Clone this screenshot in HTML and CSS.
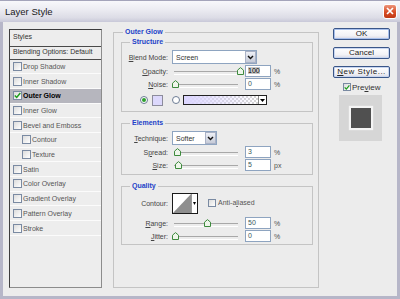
FILE: index.html
```html
<!DOCTYPE html>
<html lang="en">
<head>
    <meta charset="UTF-8">
    <title>Layer Style</title>
    <link rel="stylesheet" href="styles.css">
</head>
<body>
<div class="window">
    <div class="titlebar">
        <span class="title">Layer Style</span>
        <span class="close"><svg width="8" height="8" viewBox="0 0 8 8"><path d="M1 1L7 7M7 1L1 7" stroke="#fff" stroke-width="1.7"/></svg></span>
    </div>

    <div class="content">
        <!-- lista de estilos -->
        <div class="styles-list">
            <div class="list-head">Styles</div>
            <div class="list-blend">Blending Options: Default</div>
            <div class="item"><span class="check"></span>Drop Shadow</div>
            <div class="item"><span class="check"></span>Inner Shadow</div>
            <div class="item selected"><span class="check"><svg width="7" height="7" viewBox="0 0 7 7"><path d="M0.8 3.4L2.7 5.4L6.3 1" fill="none" stroke="#1e9e1e" stroke-width="1.5"/></svg></span>Outer Glow</div>
            <div class="item"><span class="check"></span>Inner Glow</div>
            <div class="item"><span class="check"></span>Bevel and Emboss</div>
            <div class="item sub"><span class="check"></span>Contour</div>
            <div class="item sub"><span class="check"></span>Texture</div>
            <div class="item"><span class="check"></span>Satin</div>
            <div class="item"><span class="check"></span>Color Overlay</div>
            <div class="item"><span class="check"></span>Gradient Overlay</div>
            <div class="item"><span class="check"></span>Pattern Overlay</div>
            <div class="item"><span class="check"></span>Stroke</div>
        </div>

        <fieldset class="panel">
            <legend>Outer Glow</legend>

            <fieldset class="group">
                <legend>Structure</legend>
                <div class="row tall">
                    <label class="lbl"><u>B</u>lend Mode:</label>
                    <div class="select wide"><span>Screen</span><span class="drop"><svg width="7" height="5" viewBox="0 0 7 5"><path d="M1 1L3.5 3.6L6 1" fill="none" stroke="#111" stroke-width="1.4"/></svg></span></div>
                </div>
                <div class="row">
                    <label class="lbl"><u>O</u>pacity:</label>
                    <div class="slider"><span class="thumb" style="left:68px"><svg width="7" height="8" viewBox="0 0 7 8"><path d="M0.5 3.2L3.5 0.6L6.5 3.2V7.5H0.5Z" fill="#eef6ea" stroke="#3d8a3d"/></svg></span></div>
                    <span class="field"><span class="hl">100</span></span><span class="unit">%</span>
                </div>
                <div class="row">
                    <label class="lbl"><u>N</u>oise:</label>
                    <div class="slider"><span class="thumb" style="left:3px"><svg width="7" height="8" viewBox="0 0 7 8"><path d="M0.5 3.2L3.5 0.6L6.5 3.2V7.5H0.5Z" fill="#eef6ea" stroke="#3d8a3d"/></svg></span></div>
                    <span class="field">0</span><span class="unit">%</span>
                </div>
                <div class="row colors">
                    <span class="radio on"></span>
                    <span class="swatch"></span>
                    <span class="radio second"></span>
                    <div class="gradient"><span class="ramp"></span><span class="gdrop"><svg width="5" height="3" viewBox="0 0 5 3"><path d="M0 0H5L2.5 3Z" fill="#000"/></svg></span></div>
                </div>
            </fieldset>

            <fieldset class="group spaced">
                <legend>Elements</legend>
                <div class="row tall">
                    <label class="lbl"><u>T</u>echnique:</label>
                    <div class="select narrow"><span>Softer</span><span class="drop"><svg width="7" height="5" viewBox="0 0 7 5"><path d="M1 1L3.5 3.6L6 1" fill="none" stroke="#111" stroke-width="1.4"/></svg></span></div>
                </div>
                <div class="row">
                    <label class="lbl">S<u>p</u>read:</label>
                    <div class="slider"><span class="thumb" style="left:5px"><svg width="7" height="8" viewBox="0 0 7 8"><path d="M0.5 3.2L3.5 0.6L6.5 3.2V7.5H0.5Z" fill="#eef6ea" stroke="#3d8a3d"/></svg></span></div>
                    <span class="field">3</span><span class="unit">%</span>
                </div>
                <div class="row">
                    <label class="lbl"><u>S</u>ize:</label>
                    <div class="slider"><span class="thumb" style="left:6px"><svg width="7" height="8" viewBox="0 0 7 8"><path d="M0.5 3.2L3.5 0.6L6.5 3.2V7.5H0.5Z" fill="#eef6ea" stroke="#3d8a3d"/></svg></span></div>
                    <span class="field">5</span><span class="unit">px</span>
                </div>
            </fieldset>

            <fieldset class="group spaced quality">
                <legend>Quality</legend>
                <div class="row contour">
                    <label class="lbl">Contour:</label>
                    <div class="contour-box">
                        <svg width="18" height="19" viewBox="0 0 18 19"><path d="M0 19L18 0V19Z" fill="#8e8e8e"/></svg>
                        <span class="cdrop"><svg width="3" height="3" viewBox="0 0 3 3"><path d="M0 0H3L1.5 3Z" fill="#000"/></svg></span>
                    </div>
                    <span class="check anti"></span><span class="anti-text">Anti-a<u>l</u>iased</span>
                </div>
                <div class="row range">
                    <label class="lbl"><u>R</u>ange:</label>
                    <div class="slider"><span class="thumb" style="left:35px"><svg width="7" height="8" viewBox="0 0 7 8"><path d="M0.5 3.2L3.5 0.6L6.5 3.2V7.5H0.5Z" fill="#eef6ea" stroke="#3d8a3d"/></svg></span></div>
                    <span class="field">50</span><span class="unit">%</span>
                </div>
                <div class="row">
                    <label class="lbl"><u>J</u>itter:</label>
                    <div class="slider"><span class="thumb" style="left:3px"><svg width="7" height="8" viewBox="0 0 7 8"><path d="M0.5 3.2L3.5 0.6L6.5 3.2V7.5H0.5Z" fill="#eef6ea" stroke="#3d8a3d"/></svg></span></div>
                    <span class="field">0</span><span class="unit">%</span>
                </div>
            </fieldset>
        </fieldset>

        <!-- botones -->
        <div class="actions">
            <div class="btn default">OK</div>
            <div class="btn">Cancel</div>
            <div class="btn wide-text"><u>N</u>ew Style...</div>
            <div class="preview"><span class="check"><svg width="7" height="7" viewBox="0 0 7 7"><path d="M0.8 3.4L2.7 5.4L6.3 1" fill="none" stroke="#1e9e1e" stroke-width="1.5"/></svg></span>Pre<u>v</u>iew</div>
            <div class="preview-box"><span class="sample"></span></div>
        </div>
    </div>
</div>
</body>
</html>
```

FILE: styles.css
```css
* {
    box-sizing: border-box;
}

body {
    margin: 0;
    font-family: "Liberation Sans", Arial, sans-serif;
    font-size: 7px;
    color: #333;
}

u {
    text-decoration: underline;
}

/* Ventana */
.window {
    width: 400px;
    height: 299px;
    background: #b6b6c8;
    padding: 0 3px 3px;
    display: flex;
    flex-direction: column;
}

.titlebar {
    height: 22px;
    margin: 0 -3px;
    padding: 0 3px 1px 5px;
    display: flex;
    align-items: center;
    justify-content: space-between;
    background: linear-gradient(#f8f8fb, #ececf2 40%, #dcdce6 80%, #c8c8d8);
    border-top: 1px solid #a4a4ba;
}

.title {
    font-size: 9.5px;
    color: #1a1a1a;
}

.close {
    width: 14px;
    height: 15px;
    border: 1px solid #fff;
    border-radius: 3px;
    background: linear-gradient(#ec947a, #d84c24 55%, #c03814);
    display: flex;
    align-items: center;
    justify-content: center;
}

.content {
    flex: 1;
    background: #ececec;
    display: flex;
    align-items: flex-start;
    padding: 7px 0 0 6px;
}

/* Lista de estilos */
.styles-list {
    width: 93px;
    height: 259px;
    border: 1px solid;
    border-color: #3c3c3c #8c8c8c #8c8c8c #3c3c3c;
    background: #ededed;
}

.list-head {
    height: 17px;
    line-height: 14px;
    padding-left: 3px;
    border-bottom: 1px solid #4a4a4a;
    color: #333;
}

.list-blend {
    height: 12.6px;
    line-height: 10px;
    padding-left: 3px;
    border-bottom: 1px solid #4a4a4a;
    color: #333;
}

.item {
    height: 14.7px;
    display: flex;
    align-items: center;
    padding-left: 3px;
    border-bottom: 1px solid #fbfbfb;
    color: #555;
}

.item.sub {
    padding-left: 12px;
}

.item.selected {
    background: #b6b6be;
    color: #000;
    font-weight: bold;
}

.check {
    width: 9px;
    height: 9px;
    margin-right: 1px;
    border: 1px solid #7a8aa2;
    background: linear-gradient(135deg, #dcdcdc, #fff);
    display: flex;
    align-items: center;
    justify-content: center;
    flex: none;
}

/* Grupos */
fieldset {
    margin: 0;
    min-width: 0;
    border: 1px solid #c4c4c4;
}

legend {
    padding: 0 2px;
    line-height: 10px;
    font-weight: bold;
    color: #2242c8;
}

.panel {
    width: 206px;
    height: 261px;
    margin: -2px 0 0 11px;
    padding: 0 5px 0 7px;
}

.panel > legend {
    margin-left: 2px;
}

.group {
    padding: 3px 0 5px 0;
}

.group > legend {
    margin-left: 8px;
}

.group.spaced {
    margin-top: 6px;
    padding-bottom: 3px;
}

.group.quality {
    padding-top: 2px;
    padding-bottom: 2px;
}

.row {
    height: 12px;
    margin-top: 1px;
    display: flex;
    align-items: center;
}

.row.tall {
    height: 14px;
    margin-top: 0;
}

.lbl {
    width: 46px;
    margin-right: 4px;
    text-align: right;
    color: #444;
    flex: none;
}

.select {
    height: 14px;
    padding-left: 3px;
    display: flex;
    align-items: center;
    background: #fff;
    border: 1px solid #8ea4c0;
    color: #333;
}

.select.wide {
    width: 85px;
}

.select.narrow {
    width: 45px;
}

.select .drop {
    width: 11px;
    height: 12px;
    margin-left: auto;
    display: flex;
    align-items: center;
    justify-content: center;
    background: linear-gradient(#eef0f6, #c6cbd8);
    border: 1px solid #aab2c6;
}

.slider {
    position: relative;
    width: 70px;
    height: 12px;
}

.slider::before {
    content: "";
    position: absolute;
    left: 2px;
    right: 4px;
    top: 6px;
    height: 2px;
    border-top: 1px solid #a8a8a8;
    border-bottom: 1px solid #fff;
}

.thumb {
    position: absolute;
    top: 2px;
    margin-left: -3.5px;
    width: 7px;
    height: 8px;
    display: flex;
}

.field {
    width: 26px;
    height: 12px;
    margin-left: 3px;
    padding-left: 2px;
    line-height: 10px;
    background: #fff;
    border: 1px solid #8ea4c0;
    color: #3a5a5a;
}

.field .hl {
    background: #c8c8c8;
    color: #000;
}

.unit {
    margin-left: 3px;
    color: #505050;
}

/* Fila de color */
.row.colors {
    margin-top: 4px;
    padding-left: 18px;
}

.radio {
    width: 8px;
    height: 8px;
    border-radius: 50%;
    border: 1px solid #6c7c94;
    background: #fff;
    display: flex;
    align-items: center;
    justify-content: center;
}

.radio.on::after {
    content: "";
    width: 4px;
    height: 4px;
    border-radius: 50%;
    background: #2ea02e;
}

.radio.second {
    margin-left: 9px;
}

.swatch {
    width: 11px;
    height: 11px;
    margin-left: 4px;
    background: #dcd8fc;
    border: 1px solid #8c8c9c;
}

.gradient {
    width: 84px;
    height: 10px;
    margin-left: 3px;
    border: 1px solid #222;
    display: flex;
}

.gradient .ramp {
    flex: 1;
    background: linear-gradient(to right, #dcd6ff, rgba(220, 214, 255, 0)), repeating-conic-gradient(#d4d4d4 0 25%, #fff 0 50%) 0 0 / 4px 4px;
}

.gradient .gdrop {
    width: 8px;
    border-left: 1px solid #888;
    background: #fff;
    display: flex;
    align-items: center;
    justify-content: center;
}

/* Contorno */
.row.contour {
    height: 21px;
    margin-top: 0;
}

.contour-box {
    width: 26px;
    height: 21px;
    border: 1px solid #1a1a1a;
    background: #fff;
    display: flex;
}

.contour-box .cdrop {
    flex: 1;
    border-left: 1px solid #999;
    display: flex;
    align-items: center;
    justify-content: center;
}

.check.anti {
    width: 8px;
    height: 8px;
    margin-left: 10px;
    margin-top: -2px;
}

.anti-text {
    margin-left: 1px;
    margin-top: -2px;
    color: #555;
}

.row.range {
    margin-top: 3px;
}

/* Botones */
.actions {
    width: 57px;
    margin: -1px 0 0 14px;
    display: flex;
    flex-direction: column;
}

.btn {
    height: 12px;
    margin-bottom: 7px;
    line-height: 10px;
    text-align: center;
    font-size: 8px;
    color: #222;
    border: 1px solid #3a5688;
    border-radius: 2px;
    background: linear-gradient(#fefefe, #f2f2f6 65%, #d8d8e4);
    box-shadow: inset 0 0 0 1px #c8d6f0;
}

.btn.default {
    box-shadow: inset 0 0 0 1px #a8c0ec;
}

.btn.wide-text {
    letter-spacing: 0.5px;
}

.preview {
    height: 8px;
    margin: -2px 0 0 10px;
    display: flex;
    align-items: center;
    font-size: 8px;
    color: #333;
}

.preview .check {
    width: 8px;
    height: 8px;
}

.preview-box {
    width: 43px;
    height: 46px;
    margin: 4px 0 0 6px;
    background: #d6d6d6;
    display: flex;
    align-items: center;
    justify-content: center;
}

.preview-box .sample {
    width: 20px;
    height: 20px;
    background: #505050;
    box-shadow: 0 0 1px 2px #f4f4f4;
}
```
